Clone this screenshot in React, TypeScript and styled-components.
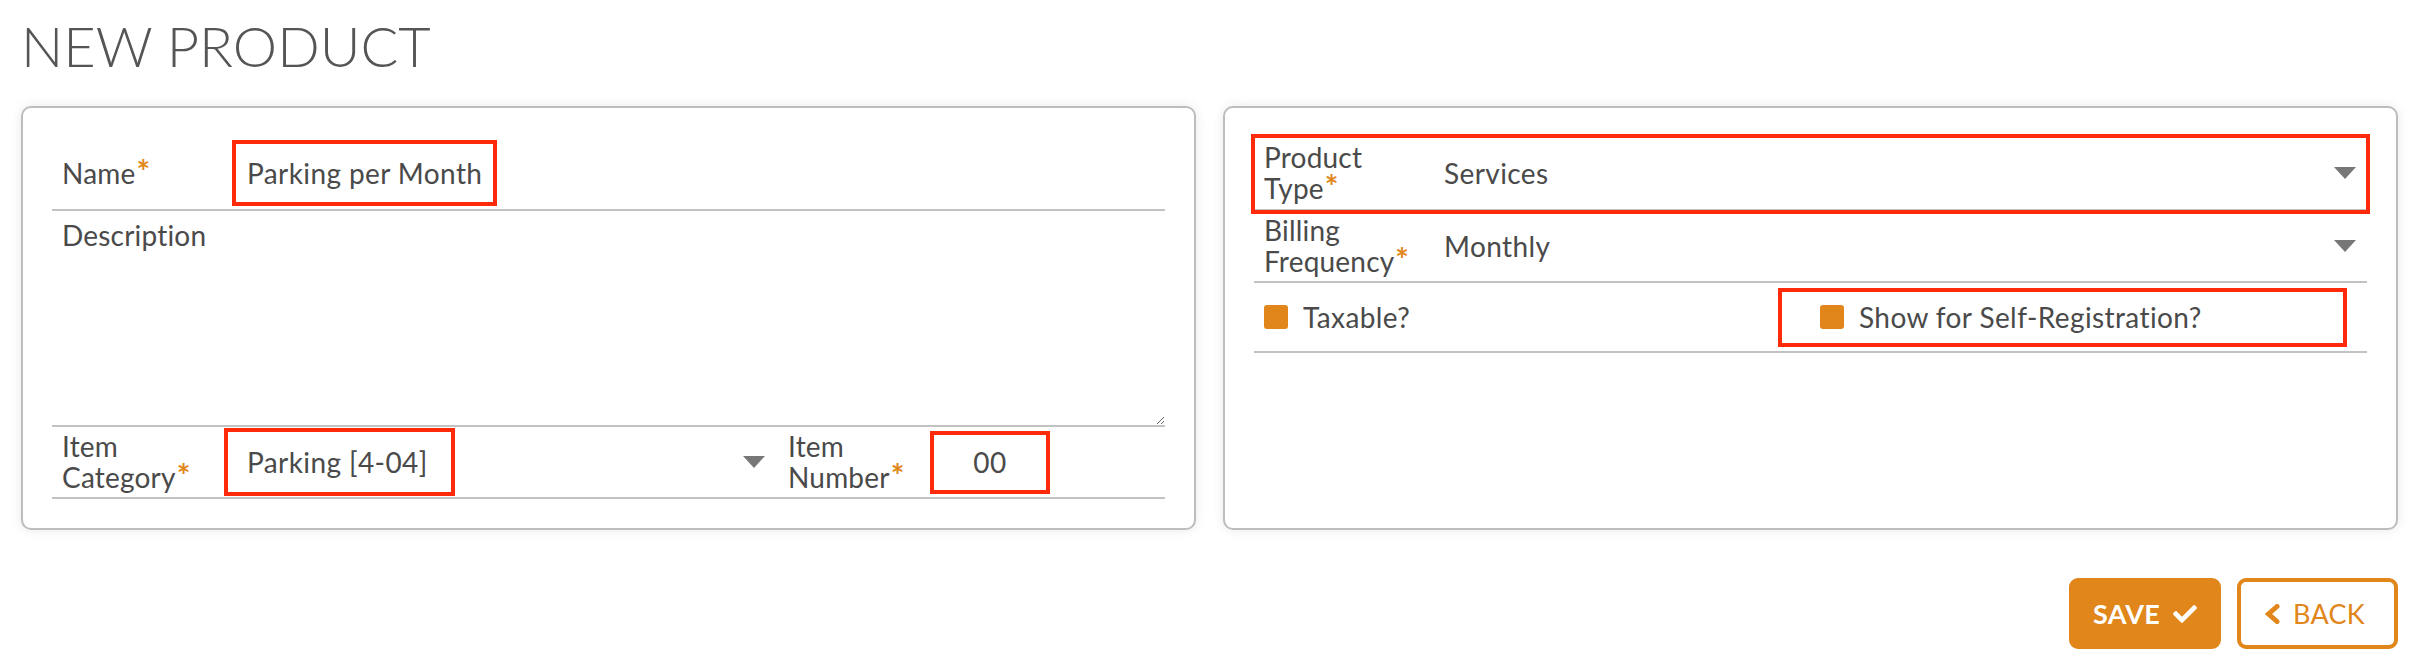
import React from 'react';
import styled, { createGlobalStyle } from 'styled-components';
import { FaCheck } from 'react-icons/fa';

const ORANGE = '#e0861a';
const RED = '#ff2a0a';
const LINE = '#c2c2c2';

const Global = createGlobalStyle`
  html, body { margin: 0; padding: 0; background: #fff; }
  body { font-family: Lato, "Open Sans", sans-serif; color: #4a4a4a; }
  * { box-sizing: border-box; }
`;

const Page = styled.div`
  width: 2424px;
  padding: 0 26px 0 21px;
`;

const Title = styled.h1`
  margin: 0;
  height: 106px;
  padding: 12px 0 0 0;
  font-weight: 300;
  font-size: 56px;
  line-height: 67px;
  color: #555;
`;

const Cards = styled.div`
  display: grid;
  grid-template-columns: 1175px 1175px;
  column-gap: 27px;
`;

const Card = styled.div`
  background: #fff;
  border: 2px solid #bdbdbd;
  border-radius: 10px;
  padding: 29px;
  box-shadow: 0 0 12px rgba(0, 0, 0, 0.09);
`;

const Row = styled.div<{ $h: number; $top?: boolean; $hl?: boolean }>`
  display: flex;
  align-items: ${(p) => (p.$top ? 'stretch' : 'center')};
  height: ${(p) => p.$h + 2}px;
  border-bottom: 2px solid ${LINE};
  ${(p) => (p.$hl ? `outline: 4px solid ${RED}; outline-offset: -1px;` : '')}
`;

const Label = styled.div<{ $w: number; $pt?: number }>`
  flex: none;
  width: ${(p) => p.$w}px;
  padding-left: 10px;
  padding-top: ${(p) => p.$pt ?? 0}px;
  font-size: 28px;
  letter-spacing: 0.2px;
  line-height: 31px;
`;

const Req = styled.span`
  color: ${ORANGE};
  font-size: 32px;
  font-weight: 700;
  line-height: 0;
  margin-left: 1px;
`;

const Highlight = styled.div<{ $w?: number; $h: number; $pl: number; $center?: boolean }>`
  display: flex;
  align-items: center;
  justify-content: ${(p) => (p.$center ? 'center' : 'flex-start')};
  flex: none;
  ${(p) => (p.$w ? `width: ${p.$w}px;` : '')}
  height: ${(p) => p.$h}px;
  padding: 0 ${(p) => p.$pl}px;
  border: 4px solid ${RED};
  font-size: 28px;
  letter-spacing: 0.4px;
  white-space: nowrap;
`;

const Spacer = styled.div`
  flex: 1;
`;

const Area = styled.textarea`
  flex: 1;
  border: none;
  outline: none;
  background: transparent;
  resize: vertical;
  font: inherit;
  margin: 0;
  padding: 8px;
`;

const Select = styled.div`
  display: flex;
  align-items: center;
  flex: 1;
  font-size: 28px;
  letter-spacing: 0.4px;
  padding-left: 10px;
  padding-right: 11px;
`;

const SelectArea = styled.div<{ $w: number }>`
  display: flex;
  align-items: center;
  flex: none;
  width: ${(p) => p.$w}px;
  align-self: stretch;
  padding-right: 13px;
`;

const Value = styled.span`
  flex: 1;
`;

const Caret = styled.span`
  width: 0;
  height: 0;
  border-left: 11.5px solid transparent;
  border-right: 11.5px solid transparent;
  border-top: 12px solid #777;
`;

const CheckRow = styled.div`
  display: flex;
  align-items: center;
  gap: 15px;
  font-size: 28px;
  letter-spacing: 0.4px;
`;

const CheckCell = styled(CheckRow)`
  width: 524px;
  padding-left: 10px;
`;

const Box = styled.span`
  width: 24px;
  height: 24px;
  border-radius: 3px;
  background: ${ORANGE};
  flex: none;
`;

const Actions = styled.div`
  display: flex;
  justify-content: flex-end;
  gap: 16px;
  margin-top: 48px;
`;

const Button = styled.button<{ $filled?: boolean; $w: number }>`
  display: flex;
  align-items: center;
  justify-content: center;
  gap: ${(p) => (p.$filled ? 13 : 12)}px;
  width: ${(p) => p.$w}px;
  height: 71px;
  border-radius: 9px;
  border: 4px solid ${ORANGE};
  background: ${(p) => (p.$filled ? ORANGE : '#fff')};
  color: ${(p) => (p.$filled ? '#fff' : ORANGE)};
  font-family: Lato, sans-serif;
  font-weight: ${(p) => (p.$filled ? 700 : 400)};
  font-size: 27px;
  letter-spacing: 0.3px;
  padding: 0 ${(p) => (p.$filled ? 0 : 6)}px 0 0;
  cursor: pointer;
`;

const Chevron = () => (
  <svg width="17" height="20" viewBox="0 0 17 20" aria-hidden="true">
    <polyline
      points="13,2.5 4.5,10 13,17.5"
      fill="none"
      stroke={ORANGE}
      strokeWidth="5"
      strokeLinecap="round"
      strokeLinejoin="miter"
    />
  </svg>
);

export default function App() {
  return (
    <>
      <Global />
      <Page>
        <Title>NEW PRODUCT</Title>
        <Cards>
          <Card>
            <Row $h={72}>
              <Label $w={180}>
                Name<Req>*</Req>
              </Label>
              <Highlight $h={66} $pl={11}>
                Parking per Month
              </Highlight>
            </Row>
            <Row $h={214} $top>
              <Label $w={180} $pt={9}>
                Description
              </Label>
              <Area />
            </Row>
            <Row $h={70}>
              <Label $w={172}>
                Item
                <br />
                Category<Req>*</Req>
              </Label>
              <SelectArea $w={554}>
                <Highlight $w={231} $h={68} $pl={19}>
                  Parking [4-04]
                </Highlight>
                <Value />
                <Caret />
              </SelectArea>
              <Label $w={152}>
                Item
                <br />
                Number<Req>*</Req>
              </Label>
              <Highlight $w={120} $h={63} $pl={0} $center>
                00
              </Highlight>
              <Spacer />
            </Row>
          </Card>
          <Card>
            <Row $h={72} $hl>
              <Label $w={180}>
                Product
                <br />
                Type<Req>*</Req>
              </Label>
              <Select>
                <Value>Services</Value>
                <Caret />
              </Select>
            </Row>
            <Row $h={70}>
              <Label $w={180}>
                Billing
                <br />
                Frequency<Req>*</Req>
              </Label>
              <Select>
                <Value>Monthly</Value>
                <Caret />
              </Select>
            </Row>
            <Row $h={68}>
              <CheckCell>
                <Box />
                Taxable?
              </CheckCell>
              <Highlight $w={569} $h={59} $pl={38}>
                <CheckRow>
                  <Box />
                  Show for Self-Registration?
                </CheckRow>
              </Highlight>
            </Row>
          </Card>
        </Cards>
        <Actions>
          <Button $filled $w={152}>
            SAVE <FaCheck size={24} />
          </Button>
          <Button $w={161}>
            <Chevron /> BACK
          </Button>
        </Actions>
      </Page>
    </>
  );
}
